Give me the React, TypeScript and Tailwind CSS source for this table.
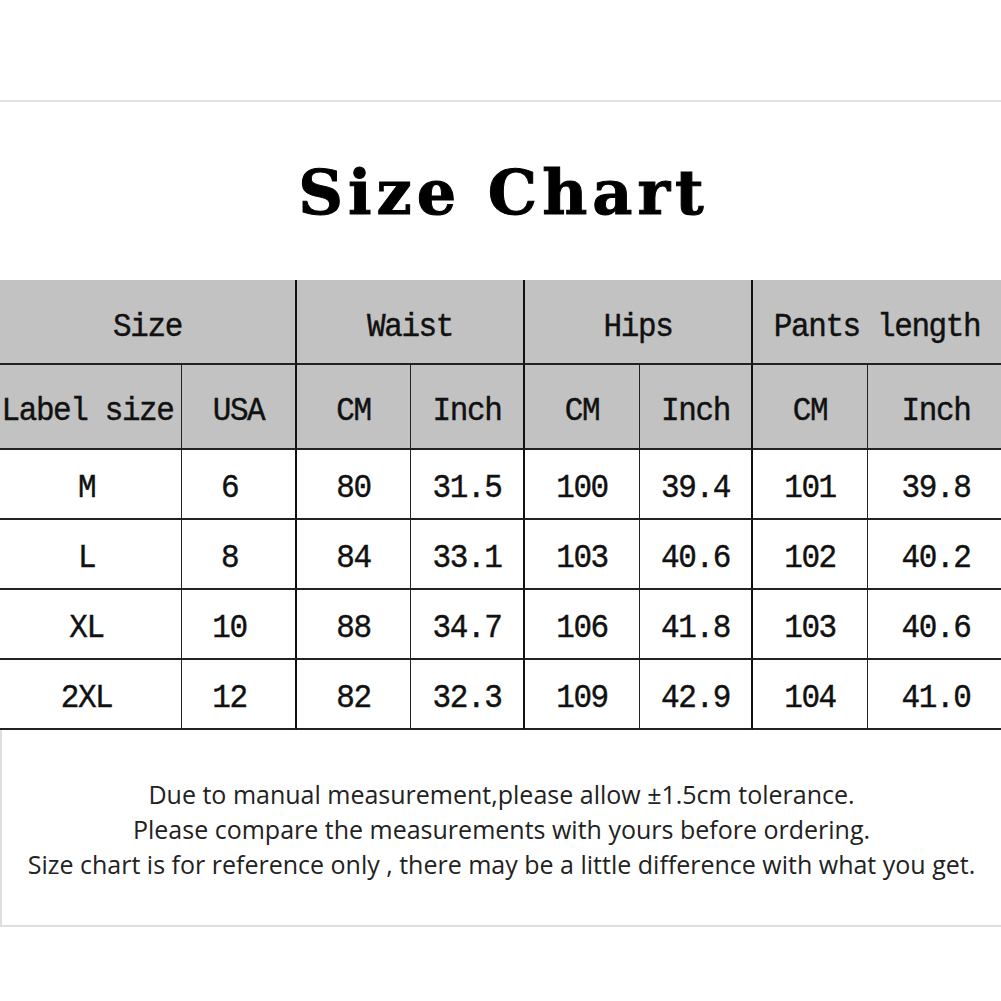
import React from "react";

const mono = "font-['Liberation_Mono',monospace]";

type Cell = { text: string; pad?: boolean };

const rows: Cell[][] = [
  [{ text: "M" }, { text: "6", pad: true }, { text: "80" }, { text: "31.5" }, { text: "100" }, { text: "39.4" }, { text: "101" }, { text: "39.8" }],
  [{ text: "L" }, { text: "8", pad: true }, { text: "84" }, { text: "33.1" }, { text: "103" }, { text: "40.6" }, { text: "102" }, { text: "40.2" }],
  [{ text: "XL" }, { text: "10", pad: true }, { text: "88" }, { text: "34.7" }, { text: "106" }, { text: "41.8" }, { text: "103" }, { text: "40.6" }],
  [{ text: "2XL" }, { text: "12", pad: true }, { text: "82" }, { text: "32.3" }, { text: "109" }, { text: "42.9" }, { text: "104" }, { text: "41.0" }],
];

const subHeads = ["Label size", "USA", "CM", "Inch", "CM", "Inch", "CM", "Inch"];

// right border per column: group edges are heavier
const rightBorder = [
  "border-r border-r-[#222]",
  "border-r-2 border-r-[#111]",
  "border-r border-r-[#222]",
  "border-r-2 border-r-[#111]",
  "border-r border-r-[#222]",
  "border-r-2 border-r-[#111]",
  "border-r border-r-[#222]",
  "",
];

function Txt({ children }: { children: React.ReactNode }) {
  return (
    <span className={`${mono} inline-block scale-y-[1.1] whitespace-pre text-[31px] leading-none tracking-[-1.4px] text-[#111] [-webkit-text-stroke:0.4px_#111]`}>
      {children}
    </span>
  );
}

export default function App() {
  return (
    <div className="min-h-[1001px] w-[1001px] overflow-hidden bg-white">
      <div className="h-[102px] border-b-2 border-[#e2e2e2]" />

      <div className="flex h-[178px] items-center justify-center pl-[6px] pt-[4px]">
        <h1 className="font-['DejaVu_Serif',serif] text-[62px] font-bold leading-none tracking-[5px] text-black [-webkit-text-stroke:1px_#000]">
          Size Chart
        </h1>
      </div>

      <div className="grid w-[1010px] grid-cols-[182px_115px_114px_114px_115px_113px_115px_1fr]">
        {/* group header */}
        <div className="col-span-2 flex h-[85px] items-center justify-center border-b-2 border-r-2 border-b-[#222] border-r-[#111] bg-[#c2c2c2] pt-[10px]">
          <Txt>Size</Txt>
        </div>
        <div className="col-span-2 flex h-[85px] items-center justify-center border-b-2 border-r-2 border-b-[#222] border-r-[#111] bg-[#c2c2c2] pt-[10px]">
          <Txt>Waist</Txt>
        </div>
        <div className="col-span-2 flex h-[85px] items-center justify-center border-b-2 border-r-2 border-b-[#222] border-r-[#111] bg-[#c2c2c2] pt-[10px]">
          <Txt>Hips</Txt>
        </div>
        <div className="col-span-2 flex h-[85px] items-center justify-center border-b-2 border-b-[#222] bg-[#c2c2c2] pr-[9px] pt-[10px]">
          <Txt>Pants length</Txt>
        </div>

        {/* sub header */}
        {subHeads.map((h, i) => (
          <div
            key={i}
            className={`flex h-[85px] items-center justify-center border-b-2 border-b-[#222] bg-[#c2c2c2] pt-[8px] ${rightBorder[i]} ${i === 7 ? "pr-[6px]" : ""} ${i === 0 ? "pr-[6px]" : ""}`}
          >
            <Txt>{h}</Txt>
          </div>
        ))}

        {/* data rows */}
        {rows.map((r, ri) =>
          r.map((c, ci) => (
            <div
              key={`${ri}-${ci}`}
              className={`flex h-[70px] items-center justify-center border-b-2 border-b-[#222] pt-[6px] ${rightBorder[ci]} ${c.pad ? "pr-[18px]" : ""} ${ci === 0 ? "pr-[8px]" : ""} ${ci === 7 ? "pr-[6px]" : ""}`}
            >
              <Txt>{c.text}</Txt>
            </div>
          ))
        )}
      </div>

      <div className="flex h-[197px] w-[1010px] items-center justify-center border-b-2 border-l-2 border-[#dedede] pr-[9px] pt-[4px]">
        <div className="text-center font-['Open_Sans',sans-serif] text-[25px] leading-[35px] text-[#222]">
          <p>Due to manual measurement,please allow ±1.5cm tolerance.</p>
          <p>Please compare the measurements with yours before ordering.</p>
          <p>Size chart is for reference only , there may be a little difference with what you get.</p>
        </div>
      </div>
    </div>
  );
}
